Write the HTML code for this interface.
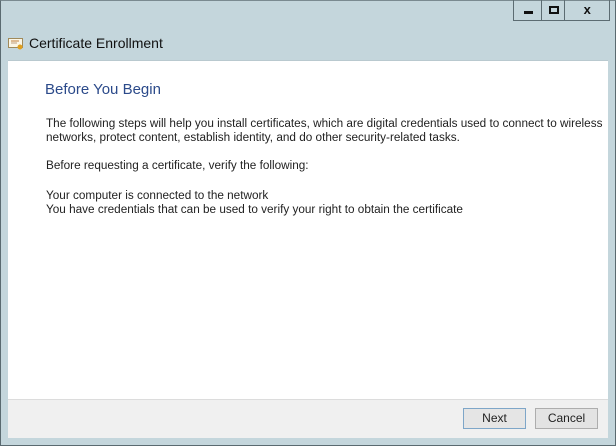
<!DOCTYPE html>
<html><head><style>
*{margin:0;padding:0;box-sizing:border-box}
body{width:616px;height:446px;overflow:hidden;background:#c4d6dc;font-family:"Liberation Sans",sans-serif;position:relative}
.frame{position:absolute;left:0;top:0;width:616px;height:446px;border:1px solid #5a6a70;border-top:1px solid #7a8a90}
.btns{position:absolute;left:513px;top:0;height:21px;width:97px;border:1px solid #5c6c72;border-top:none;display:flex}
.btns div{height:20px;position:relative}
.t{position:absolute;font-size:14px;color:#111}
.panel{position:absolute;left:8px;top:60px;width:600px;height:339px;background:#fff;border-top:1px solid #b9c9cf}
.foot{position:absolute;left:8px;top:399px;width:600px;height:39px;background:#f0f0f0;border-top:1px solid #dcdcdc}
.p{position:absolute;left:46px;font-size:11.75px;color:#222;white-space:nowrap}
.b{position:absolute;top:408px;height:21px;border:1px solid #adadad;background:#e3e3e3;font-size:12px;color:#222;text-align:center;line-height:19px}
</style></head><body>
<div class="frame"></div>
<div class="btns">
<div style="width:28px;border-right:1px solid #5c6c72"><div style="position:absolute;left:10px;top:11px;width:9px;height:3px;background:#111"></div></div>
<div style="width:24px;border-right:1px solid #5c6c72"><div style="position:absolute;left:7px;top:6px;width:10px;height:8px;border:2px solid #111"></div></div>
<div style="width:44px;font-weight:bold;font-size:13px;text-align:center;line-height:19px;color:#111">x</div>
</div>
<svg style="position:absolute;left:8px;top:36px" width="16" height="15" viewBox="0 0 16 15"><rect x="0.5" y="2.5" width="14" height="9" fill="#fbf6e6" stroke="#a08a5a"/><line x1="3" y1="5" x2="11" y2="5" stroke="#c08040"/><line x1="3" y1="7" x2="9" y2="7" stroke="#c0a080"/><circle cx="12" cy="11" r="2.5" fill="#e0a020"/></svg>
<div class="t" style="left:29px;top:35px">Certificate Enrollment</div>
<div class="panel"></div>
<div style="position:absolute;left:45px;top:81px;font-size:15px;color:#2b4a8a">Before You Begin</div>
<div class="p" style="top:117px">The following steps will help you install certificates, which are digital credentials used to connect to wireless</div>
<div class="p" style="top:131px">networks, protect content, establish identity, and do other security-related tasks.</div>
<div class="p" style="top:159px">Before requesting a certificate, verify the following:</div>
<div class="p" style="top:189px">Your computer is connected to the network</div>
<div class="p" style="top:203px">You have credentials that can be used to verify your right to obtain the certificate</div>
<div class="foot"></div>
<div class="b" style="left:463px;width:63px;border-color:#7ea6c8;background:#e5e5e5">Next</div>
<div class="b" style="left:535px;width:63px">Cancel</div>
</body></html>
